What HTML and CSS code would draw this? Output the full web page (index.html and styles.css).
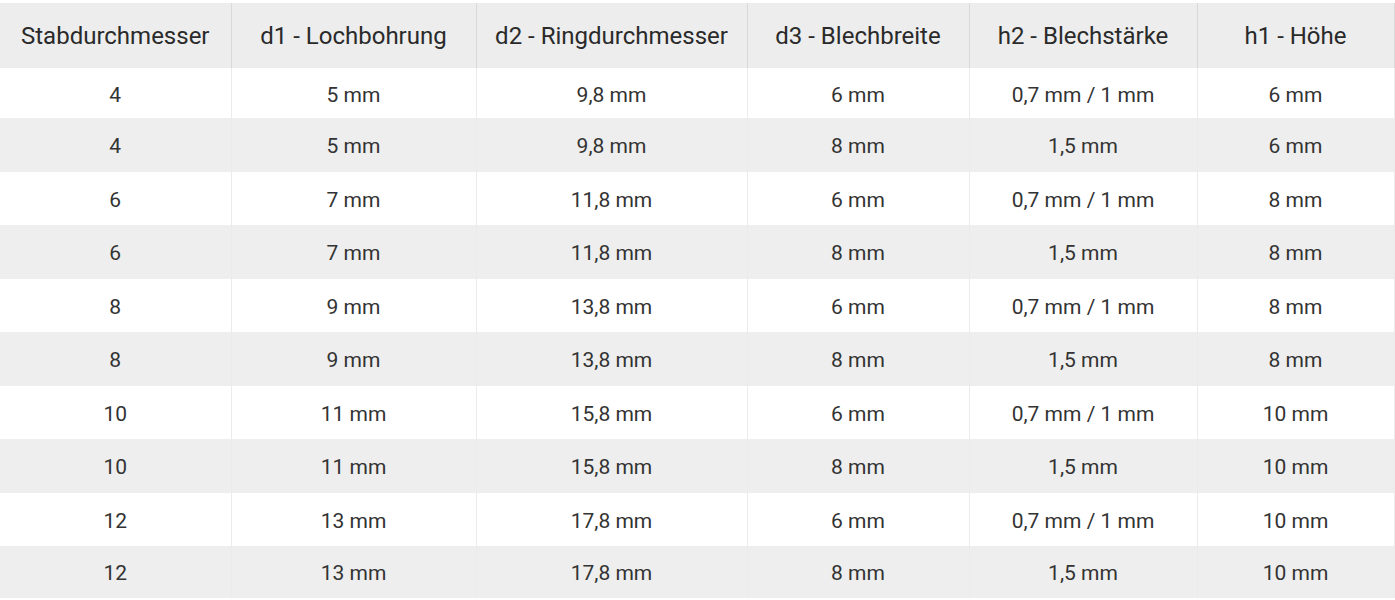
FILE: index.html
```html
<!DOCTYPE html>
<html lang="de">
<head>
<meta charset="utf-8">
<title>Tabelle</title>
<link rel="stylesheet" href="styles.css">
</head>
<body>
<table class="spec">
<colgroup>
<col class="c1"><col class="c2"><col class="c3"><col class="c4"><col class="c5"><col class="c6">
</colgroup>
<thead>
<tr><th>Stabdurchmesser</th><th>d1 - Lochbohrung</th><th>d2 - Ringdurchmesser</th><th>d3 - Blechbreite</th><th>h2 - Blechstärke</th><th>h1 - Höhe</th></tr>
</thead>
<tbody>
<tr><td>4</td><td>5 mm</td><td>9,8 mm</td><td>6 mm</td><td>0,7 mm / 1 mm</td><td>6 mm</td></tr>
<tr><td>4</td><td>5 mm</td><td>9,8 mm</td><td>8 mm</td><td>1,5 mm</td><td>6 mm</td></tr>
<tr><td>6</td><td>7 mm</td><td>11,8 mm</td><td>6 mm</td><td>0,7 mm / 1 mm</td><td>8 mm</td></tr>
<tr><td>6</td><td>7 mm</td><td>11,8 mm</td><td>8 mm</td><td>1,5 mm</td><td>8 mm</td></tr>
<tr><td>8</td><td>9 mm</td><td>13,8 mm</td><td>6 mm</td><td>0,7 mm / 1 mm</td><td>8 mm</td></tr>
<tr><td>8</td><td>9 mm</td><td>13,8 mm</td><td>8 mm</td><td>1,5 mm</td><td>8 mm</td></tr>
<tr><td>10</td><td>11 mm</td><td>15,8 mm</td><td>6 mm</td><td>0,7 mm / 1 mm</td><td>10 mm</td></tr>
<tr><td>10</td><td>11 mm</td><td>15,8 mm</td><td>8 mm</td><td>1,5 mm</td><td>10 mm</td></tr>
<tr><td>12</td><td>13 mm</td><td>17,8 mm</td><td>6 mm</td><td>0,7 mm / 1 mm</td><td>10 mm</td></tr>
<tr><td>12</td><td>13 mm</td><td>17,8 mm</td><td>8 mm</td><td>1,5 mm</td><td>10 mm</td></tr>
</tbody>
</table>
</body>
</html>
```
FILE: styles.css
```css
html, body {
  margin: 0;
  padding: 0;
  background: #ffffff;
}
body {
  padding-top: 3px;
  font-family: Roboto, "Liberation Sans", sans-serif;
  color: #333333;
}
.spec {
  width: 1394px;
  border-collapse: collapse;
  table-layout: fixed;
}
.c1 { width: 231px; }
.c2 { width: 245px; }
.c3 { width: 271px; }
.c4 { width: 222px; }
.c5 { width: 228px; }
.c6 { width: 197px; }
.spec th {
  height: 65px;
  padding: 0;
  background: #ededed;
  font-size: 24px;
  font-weight: 400;
  color: #2a2a2a;
  text-align: center;
  vertical-align: middle;
  border-right: 1px solid #d9d9d9;
  white-space: nowrap;
}
.spec td {
  height: 53px;
  padding: 2px 0 0;
  box-sizing: border-box;
  font-size: 21px;
  text-align: center;
  vertical-align: middle;
  border-right: 1px solid #ebebeb;
}
.spec tbody tr:first-child td {
  height: 50px;
  padding-top: 4px;
}
.spec tbody tr:nth-child(even) td {
  height: 54px;
  background: #eeeeee;
}
.spec tbody tr:last-child td {
  height: 52px;
}
```
